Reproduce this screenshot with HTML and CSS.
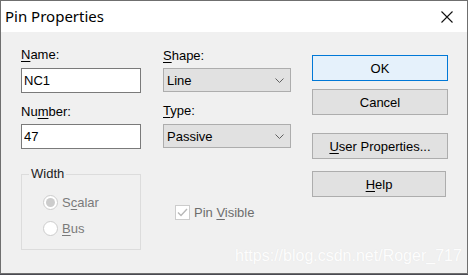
FILE: index.html
```html
<!DOCTYPE html>
<html lang="en">
<head>
    <meta charset="UTF-8">
    <title>Pin Properties</title>
    <link rel="stylesheet" href="styles.css">
</head>
<body>
    <div class="window">
        <div class="titlebar">
            <span class="title">Pin Properties</span>
            <svg class="close" width="12" height="12" viewBox="0 0 12 12">
                <path d="M0.5 0.5 L11.5 11.5 M11.5 0.5 L0.5 11.5" stroke="#111" stroke-width="1.1" fill="none"/>
            </svg>
        </div>
        <div class="content">
            <div class="col col-left">
                <div class="label"><u>N</u>ame:</div>
                <input class="field" type="text" value="NC1">
                <div class="label label-second">Nu<u>m</u>ber:</div>
                <input class="field field-second" type="text" value="47">
                <div class="group">
                    <span class="legend">Width</span>
                    <div class="radio">
                        <span class="dot checked"></span>
                        <span>S<u>c</u>alar</span>
                    </div>
                    <div class="radio">
                        <span class="dot"></span>
                        <span><u>B</u>us</span>
                    </div>
                </div>
            </div>
            <div class="col col-mid">
                <div class="label"><u>S</u>hape:</div>
                <div class="select">
                    <span>Line</span>
                    <svg width="9" height="5" viewBox="0 0 9 5"><path d="M0.5 0.5 L4.5 4.5 L8.5 0.5" stroke="#606060" fill="none"/></svg>
                </div>
                <div class="label label-second"><u>T</u>ype:</div>
                <div class="select select-second">
                    <span>Passive</span>
                    <svg width="9" height="5" viewBox="0 0 9 5"><path d="M0.5 0.5 L4.5 4.5 L8.5 0.5" stroke="#606060" fill="none"/></svg>
                </div>
                <div class="check">
                    <span class="box">
                        <svg width="13" height="13" viewBox="0 0 13 13"><path d="M2 6.5 L5 9.5 L11 3" stroke="#b8b8b8" stroke-width="1.4" fill="none"/></svg>
                    </span>
                    <span>Pin <u>V</u>isible</span>
                </div>
            </div>
            <div class="col col-right">
                <button class="btn btn-default">OK</button>
                <button class="btn">Cancel</button>
                <button class="btn btn-gap"><u>U</u>ser Properties...</button>
                <button class="btn btn-help"><u>H</u>elp</button>
            </div>
        </div>
        <div class="watermark">https://blog.csdn.net/Roger_717</div>
    </div>
</body>
</html>
```

FILE: styles.css
```css
body {
    margin: 0;
    background-color: #4a4a52;
    font-family: "Liberation Sans", Arial, sans-serif;
    font-size: 13px;
}
.window {
    position: relative;
    width: 468px;
    height: 274px;
    box-sizing: border-box;
    border: 1px solid #6f6f6f;
    background-color: #f0f0f0;
}
.titlebar {
    height: 31px;
    background-color: #fff;
    display: flex;
    align-items: center;
    justify-content: space-between;
    padding: 0 14px 0 4px;
}
.title {
    font-family: "Noto Sans", sans-serif;
    font-size: 15px;
    color: #000;
    margin-top: -1px;
}
.close {
    margin-top: 1px;
}
.content {
    display: flex;
    padding-left: 20px;
}
u {
    text-decoration-thickness: 1px;
    text-underline-offset: 2px;
}
.col {
    display: flex;
    flex-direction: column;
}
.col-left {
    width: 120px;
    padding-top: 15px;
}
.col-mid {
    width: 128px;
    margin-left: 22px;
    padding-top: 16px;
}
.col-right {
    width: 136px;
    margin-left: 21px;
    padding-top: 23px;
}
.label {
    line-height: 16px;
    height: 16px;
    color: #000;
}
.label-second {
    margin-top: 11px;
}
.field {
    margin: 5px 0 0;
    height: 25px;
    box-sizing: border-box;
    border: 1px solid #7a7a7a;
    background-color: #fff;
    padding: 0 2px;
    font-family: "Liberation Sans", Arial, sans-serif;
    font-size: 13px;
    color: #000;
    outline: none;
}
.field-second {
    margin-top: 4px;
}
.select {
    margin-top: 4px;
    height: 24px;
    box-sizing: border-box;
    border: 1px solid #adadad;
    background-color: #e1e1e1;
    display: flex;
    align-items: center;
    justify-content: space-between;
    padding: 0 6px 0 3px;
}
.select-second {
    margin-top: 5px;
}
.group {
    position: relative;
    margin-top: 25px;
    height: 76px;
    box-sizing: border-box;
    border: 1px solid #dcdcdc;
    padding: 20px 0 0 21px;
    display: flex;
    flex-direction: column;
    gap: 11px;
}
.legend {
    position: absolute;
    top: -8px;
    left: 7px;
    padding: 0 2px;
    background-color: #f0f0f0;
    color: #222;
    line-height: 14px;
}
.radio {
    display: flex;
    align-items: center;
    gap: 4px;
    color: #7a7a7a;
    height: 15px;
}
.dot {
    width: 15px;
    height: 15px;
    box-sizing: border-box;
    border: 1px solid #cccccc;
    border-radius: 50%;
    background-color: #fff;
    display: flex;
    align-items: center;
    justify-content: center;
}
.dot.checked::after {
    content: "";
    width: 9px;
    height: 9px;
    border-radius: 50%;
    background-color: #cccccc;
}
.check {
    margin-top: 57px;
    margin-left: 12px;
    display: flex;
    align-items: center;
    gap: 4px;
    color: #6d6d6d;
}
.box {
    width: 15px;
    height: 15px;
    box-sizing: border-box;
    border: 1px solid #cccccc;
    background-color: #fff;
    display: flex;
    align-items: center;
    justify-content: center;
}
.btn {
    height: 26px;
    width: 136px;
    box-sizing: border-box;
    border: 1px solid #adadad;
    background-color: #e1e1e1;
    font-family: "Liberation Sans", Arial, sans-serif;
    font-size: 13px;
    color: #000;
    padding: 0;
    margin-top: 8px;
}
.btn-default {
    margin-top: 0;
    border-color: #0078d7;
    background-color: #e5f1fb;
}
.btn-gap {
    margin-top: 18px;
}
.btn-help {
    margin-top: 12px;
    width: 134px;
}
.watermark {
    position: absolute;
    left: 234px;
    top: 246px;
    font-size: 16px;
    color: #fdfdfd;
    text-shadow: 0 0 1px #e2e2e2;
}
```
